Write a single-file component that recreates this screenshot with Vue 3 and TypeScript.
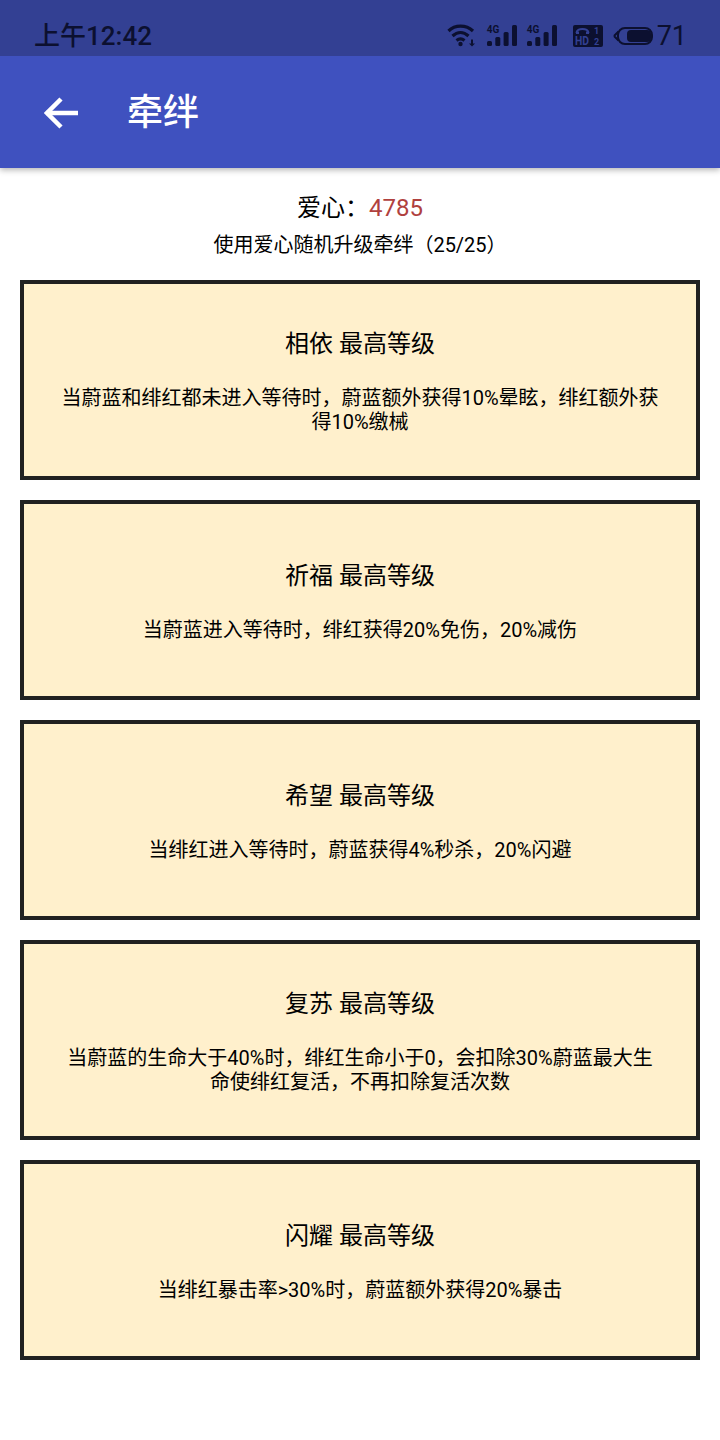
<script setup lang="ts">
interface Bond { name: string; desc: string }
const C = '\uFF0C'
const bonds: Bond[] = [
  { name: '相依', desc: `当蔚蓝和绯红都未进入等待时${C}蔚蓝额外获得10%晕眩${C}绯红额外获得10%缴械` },
  { name: '祈福', desc: `当蔚蓝进入等待时${C}绯红获得20%免伤${C}20%减伤` },
  { name: '希望', desc: `当绯红进入等待时${C}蔚蓝获得4%秒杀${C}20%闪避` },
  { name: '复苏', desc: `当蔚蓝的生命大于40%时${C}绯红生命小于0${C}会扣除30%蔚蓝最大生命使绯红复活${C}不再扣除复活次数` },
  { name: '闪耀', desc: `当绯红暴击率>30%时${C}蔚蓝额外获得20%暴击` },
]
</script>

<template>
  <div class="page">
    <div class="status">
      <span class="time">上午12:42</span>
      <div class="status-icons">
        <svg class="wifi" width="30" height="26" viewBox="0 0 30 26" fill="none" stroke="#0c1030" stroke-width="3.200">
          <path d="M1.500 8 C8 1.500 19 1.500 26 8" />
          <path d="M5.500 13 C10.500 8.500 16.500 8.500 21.500 13" />
          <path d="M9.500 17.500 C12 15.500 15 15.500 17.500 17.500" />
          <circle cx="13.500" cy="21" r="2.200" fill="#0c1030" stroke="none" />
          <path d="M25 16.500v5" stroke-width="2" />
          <path d="M22 20.500h6l-3 3z" fill="#0c1030" stroke="none" />
        </svg>
        <div class="signal">
          <span class="g4">4G</span>
          <svg width="30" height="24" viewBox="0 0 30 24" fill="#0c1030">
            <rect x="0" y="17" width="5" height="5" rx="1.500" />
            <rect x="8.300" y="13" width="5" height="9" rx="1.500" />
            <rect x="16.600" y="8" width="5" height="14" rx="1.500" />
            <rect x="25" y="1" width="5" height="21" rx="1.500" />
          </svg>
        </div>
        <div class="signal second">
          <span class="g4">4G</span>
          <svg width="30" height="24" viewBox="0 0 30 24" fill="#0c1030">
            <rect x="0" y="17" width="5" height="5" rx="1.500" />
            <rect x="8.300" y="13" width="5" height="9" rx="1.500" />
            <rect x="16.600" y="8" width="5" height="14" rx="1.500" />
            <rect x="25" y="1" width="5" height="21" rx="1.500" />
          </svg>
        </div>
        <svg class="hd" width="30" height="24" viewBox="0 0 30 24">
          <rect x="0" y="1" width="30" height="22" rx="2" fill="#0c1030" />
          <path d="M3.500 9 C3.500 3.500 15.500 3.500 15.500 9" fill="none" stroke="#334093" stroke-width="2" />
          <rect x="3" y="7.500" width="3" height="2.500" fill="#334093" />
          <rect x="13" y="7.500" width="3" height="2.500" fill="#334093" />
          <text x="2" y="20.500" class="hd-text" textLength="14" lengthAdjust="spacingAndGlyphs">HD</text>
          <text x="21" y="10" class="hd-num">1</text>
          <text x="21" y="20.500" class="hd-num">2</text>
        </svg>
        <svg class="battery" width="42" height="22" viewBox="0 0 42 22">
          <path d="M1 11 L5.500 6.500 M1 11 L5.500 15.500" stroke="#0c1030" stroke-width="2" fill="none" />
          <rect x="5" y="3" width="34" height="16" rx="7" fill="none" stroke="#0c1030" stroke-width="2" />
          <rect x="14" y="5" width="24" height="12" rx="4" fill="#0c1030" />
        </svg>
        <span class="level">71</span>
      </div>
    </div>

    <header class="appbar">
      <svg class="back" width="36" height="32" viewBox="0 0 36 32" fill="none" stroke="#fff" stroke-width="4.500">
        <path d="M2.500 16 H34" />
        <path d="M17 2 L3 16 L17 30" />
      </svg>
      <h1 class="title">牵绊</h1>
    </header>

    <div class="summary">
      <div class="hearts">爱心&#xFF1A;<span class="num">4785</span></div>
      <div class="hint">使用爱心随机升级牵绊&#xFF08;25/25&#xFF09;</div>
    </div>

    <div class="cards">
      <section v-for="b in bonds" :key="b.name" class="card">
        <div class="card-title">{{ b.name }} 最高等级</div>
        <div class="card-desc">{{ b.desc }}</div>
      </section>
    </div>
  </div>
</template>

<style scoped>
.page {
  width: 720px;
  height: 1440px;
  overflow: hidden;
  background: #fff;
  color: #000;
  font-family: Roboto, "Noto Sans CJK SC", sans-serif;
}
.status {
  height: 56px;
  background: #334093;
  color: #0c1030;
  display: flex;
  align-items: center;
  justify-content: space-between;
  padding: 0 35px 0 34px;
  box-sizing: border-box;
  position: relative;
  z-index: 2;
}
.time {
  font-size: 26px;
  font-weight: 500;
  position: relative;
  top: 8px;
  line-height: 32px;
}
.status-icons {
  display: flex;
  align-items: center;
  position: relative;
  top: 8px;
  left: 2px;
}
.wifi { margin-right: 10px; }
.signal { position: relative; width: 30px; height: 24px; margin-right: 10px; }
.signal.second { margin-right: 16px; }
.signal svg { position: absolute; left: 0; top: 0; }
.g4 {
  position: absolute;
  left: 0;
  top: 0;
  font-size: 10px;
  line-height: 12px;
  font-weight: 700;
}
.hd { margin-right: 10px; }
.hd-text { font-size: 13px; font-weight: 700; fill: #334093; }
.hd-num { font-size: 9px; font-weight: 700; fill: #334093; }
.level { font-size: 27px; font-weight: 400; margin-left: 2px; line-height: 32px; }
.appbar {
  height: 112px;
  background: #3f51bf;
  display: flex;
  align-items: center;
  padding-left: 43px;
  box-sizing: border-box;
  box-shadow: 0 2px 6px rgba(0, 0, 0, 0.3);
  position: relative;
  z-index: 1;
}
.back { margin-right: 48px; position: relative; top: 1px; left: 1px; }
.title {
  margin: 2px 0 0;
  color: #fff;
  font-size: 36px;
  font-weight: 500;
  line-height: 40px;
}
.summary {
  text-align: center;
  padding-top: 25px;
  height: 112px;
  box-sizing: border-box;
}
.hearts { font-size: 24px; line-height: 30px; }
.num { color: #b0413e; }
.hint { font-size: 20px; line-height: 24px; margin-top: 10px; }
.cards {
  display: flex;
  flex-direction: column;
  gap: 20px;
  padding: 0 20px;
}
.card {
  height: 200px;
  box-sizing: border-box;
  border: 4px solid #212121;
  background: #fff0cc;
  display: flex;
  flex-direction: column;
  align-items: center;
  justify-content: center;
  padding: 2px 36px 0;
  text-align: center;
}
.card-title { font-size: 24px; line-height: 32px; margin-bottom: 26px; }
.card-desc { font-size: 20px; line-height: 24px; }
</style>
